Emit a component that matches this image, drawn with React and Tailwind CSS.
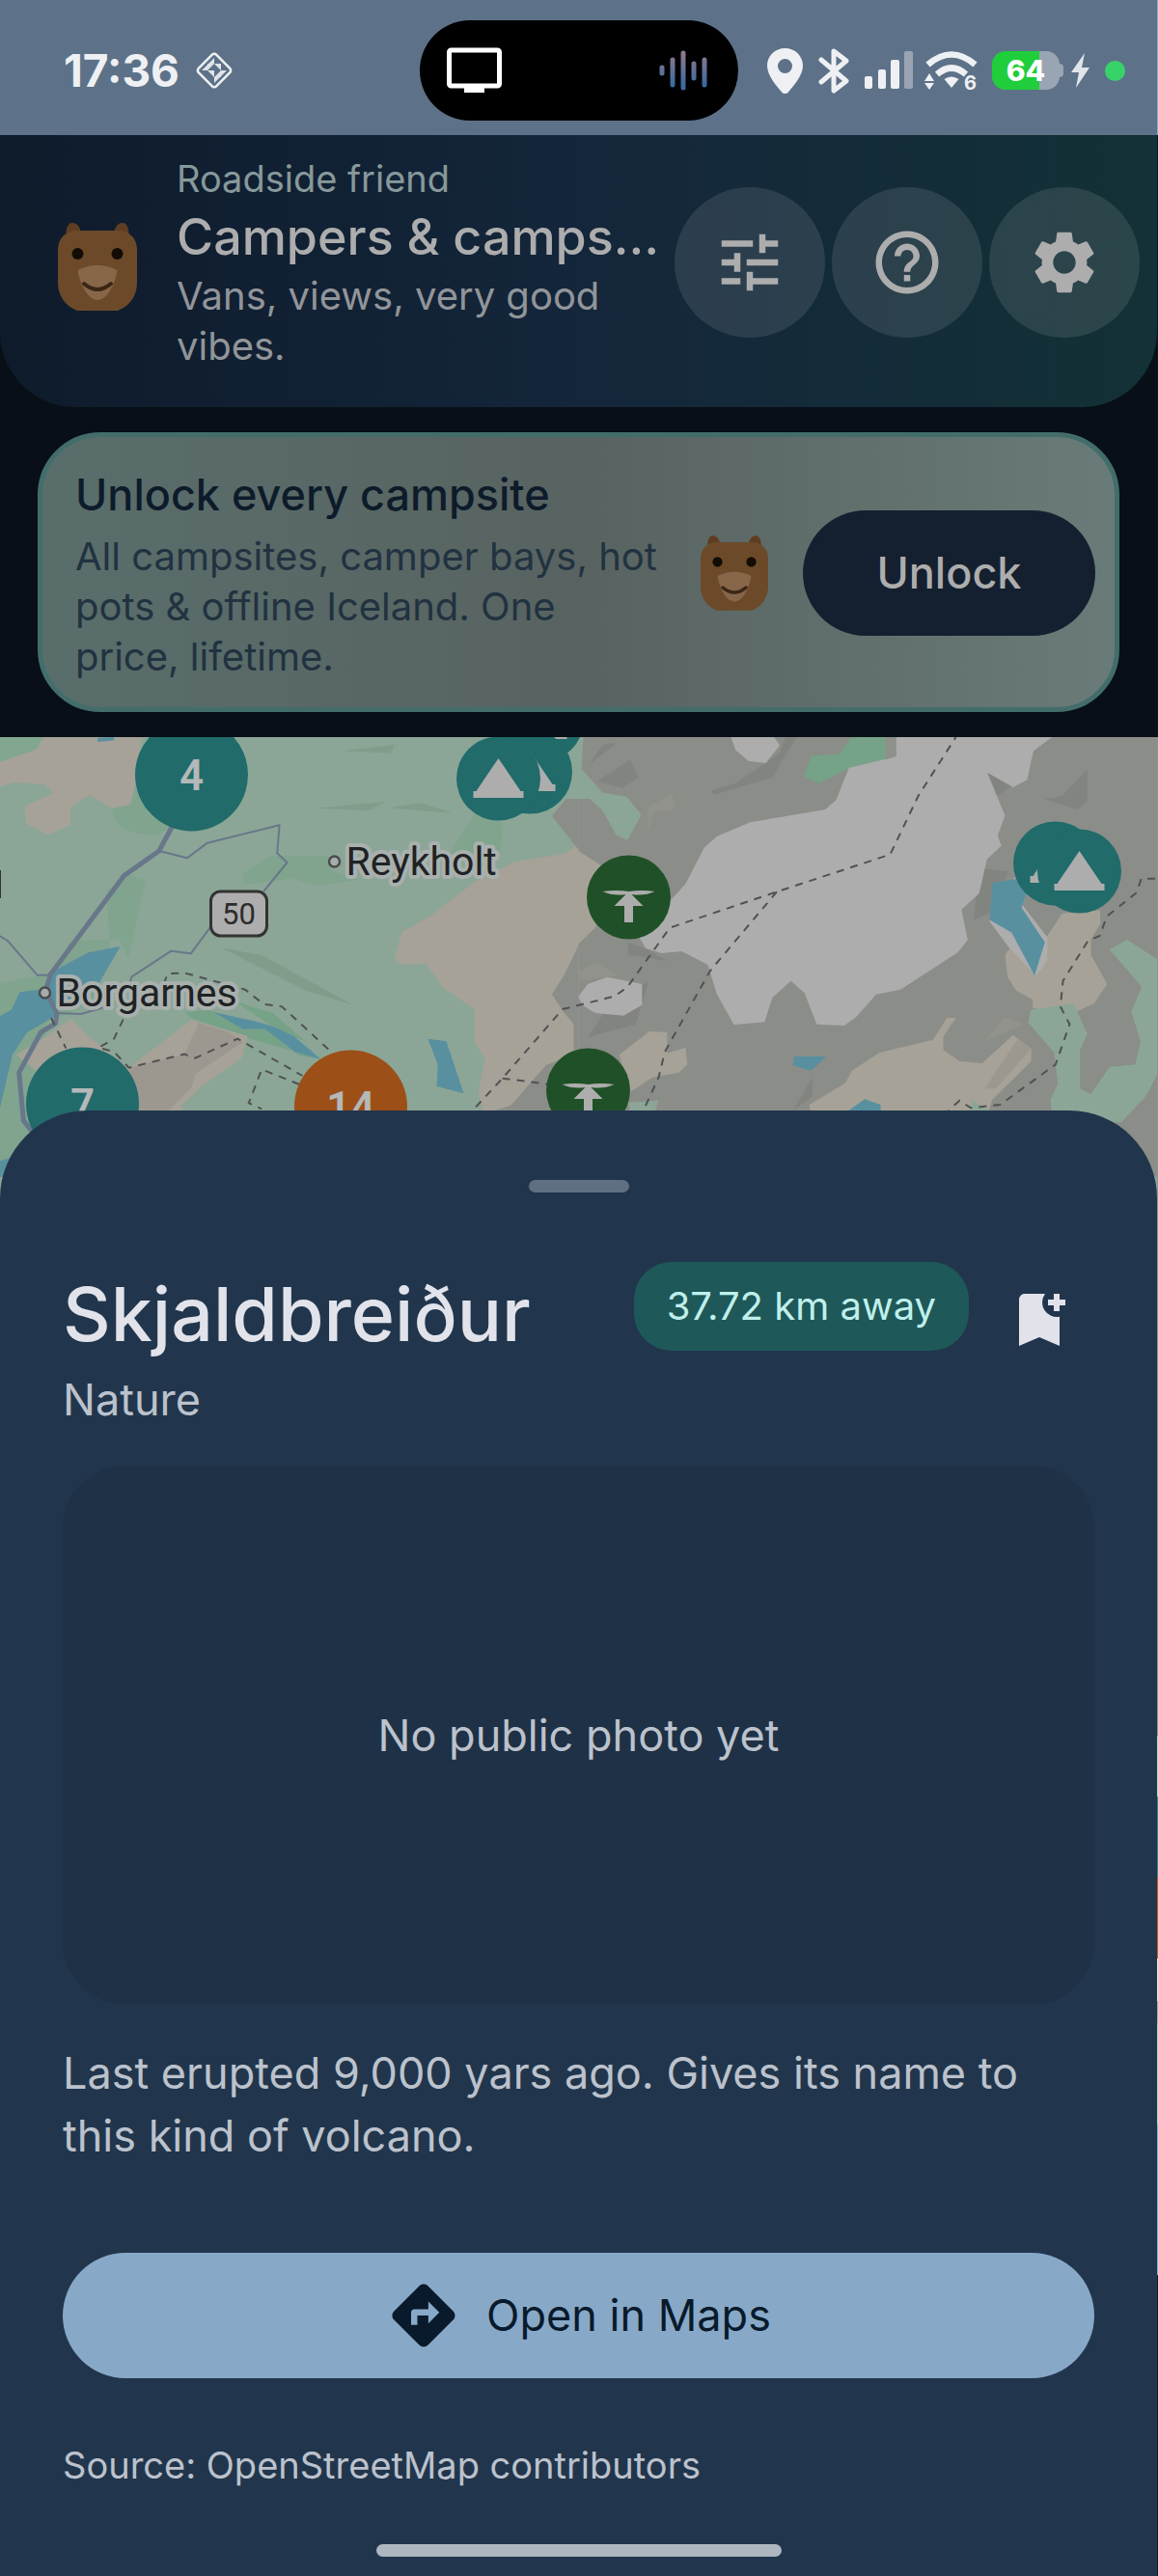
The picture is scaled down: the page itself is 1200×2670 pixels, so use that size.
import { MdBookmarkAdd, MdDirections, MdHelpOutline, MdSettings, MdTune } from 'react-icons/md';

const HEADER_ACTIONS = [
  { label: 'Filters', Icon: MdTune },
  { label: 'Help', Icon: MdHelpOutline },
  { label: 'Settings', Icon: MdSettings },
];

function Bear({ className }) {
  return (
    <svg viewBox="0 0 82 91" className={className} aria-hidden="true">
      <path d="M8 20C8 8 9 0 15 0s9 6 9 14zM74 20C74 8 73 0 67 0s-9 6-9 14z" fill="#5f3d20" />
      <path d="M20 8H62C74 8 82 16 82 28V62C82 75 75 86 62 91H20C7 86 0 75 0 62V28C0 16 8 8 20 8Z" fill="#6c4a29" />
      <circle cx="20.500" cy="32" r="6" fill="#120c05" />
      <circle cx="61.500" cy="32" r="6" fill="#120c05" />
      <path d="M20.500 49Q41 39 61.500 49C59 64 51 80 41 80S23 64 20.500 49Z" fill="#87664a" />
      <path d="M27 63Q41 75 55 63" fill="none" stroke="#3b2614" strokeWidth="4" strokeLinecap="round" />
    </svg>
  );
}

function StatusBar() {
  return (
    <div className="grid h-[140px] grid-cols-[1fr_330px_1fr] items-center bg-[#5d7288] pt-1.5 text-[#eef0f3]">
      <div className="flex items-center gap-4 pl-[66px]">
        <span className="text-[46px] leading-[56px] font-bold">17:36</span>
        <svg viewBox="0 0 40 40" className="size-10" fill="none" stroke="currentColor">
          <rect x="7" y="7" width="26" height="26" rx="3" strokeWidth="2.500" transform="rotate(45 20 20)" />
          <path
            d="M20 7v6h-6zM13 14v6H7zM13 13h7l-7 7zM20 13h7v7zM13 20h7v7zM20 27l7-7v7zM27 20h6l-6 6zM20 27h6l-6 6z"
            fill="currentColor"
            fillOpacity="0.900"
            stroke="none"
          />
        </svg>
      </div>

      <div className="flex h-[104px] items-center justify-between rounded-full bg-black pr-8 pl-7">
        <svg viewBox="0 0 57 48" className="h-12 w-[57px]">
          <rect x="2.500" y="3" width="52" height="37" rx="2" fill="none" stroke="#fff" strokeWidth="5" />
          <path d="M18 41h21v6H18z" fill="#fff" />
        </svg>
        <svg viewBox="0 0 50 42" className="h-[42px] w-[50px]" strokeWidth="5" strokeLinecap="round">
          <defs>
            <linearGradient id="wave" gradientUnits="userSpaceOnUse" x1="0" y1="2" x2="0" y2="36">
              <stop offset="0" stopColor="#95788c" />
              <stop offset="1" stopColor="#3a6ba0" />
            </linearGradient>
          </defs>
          <path d="M3 18v6M14 10v26M25 3v36M36 14v15M47 10v26" stroke="url(#wave)" />
        </svg>
      </div>

      <div className="flex items-center justify-end gap-4 pr-[33px]">
        <svg viewBox="0 0 37 47" className="h-[47px] w-[37px]" fill="currentColor">
          <path fillRule="evenodd" d="M18.500 0C29 0 37 8 37 18c0 11-10 21-15.500 28-1.500 1.600-4.500 1.600-6 0C10 39 0 29 0 18 0 8 8 0 18.500 0zm0 11a7.500 7.500 0 1 0 0 15 7.500 7.500 0 0 0 0-15z" />
        </svg>
        <svg viewBox="0 0 32 47" className="h-[47px] w-8" fill="none" stroke="currentColor" strokeWidth="5" strokeLinejoin="round" strokeLinecap="round">
          <path d="M3 12l26 22-13 10V3l13 10L3 35" />
        </svg>
        <svg viewBox="0 0 50 40" className="h-10 w-[50px]" fill="currentColor">
          <rect x="0" y="26" width="8" height="13" rx="2" />
          <rect x="14" y="19" width="8" height="20" rx="2" />
          <rect x="27" y="9" width="9" height="30" rx="2" />
          <rect x="41" y="0" width="9" height="39" rx="2" fill="#99a5b3" />
        </svg>
        <svg viewBox="0 0 54 41" className="-ml-1 h-[41px] w-[54px] overflow-visible" fill="none" stroke="currentColor" strokeWidth="6.500">
          <path d="M3.500 14Q28 -7 52.500 14" />
          <path d="M13 24Q28 11 43 24" />
          <path d="M20.500 29Q28 24 35.500 29L28 38Z" fill="currentColor" stroke="none" />
          <path d="M5 23l5 8H0zM0 33h10l-5 7z" fill="currentColor" stroke="none" />
          <text x="54" y="40" textAnchor="end" fill="currentColor" stroke="none" className="text-[20px] font-bold">6</text>
        </svg>
        <div className="flex items-center">
          <div className="flex h-10 w-[70px] items-center justify-center rounded-[14px] bg-linear-to-r from-[#20ce3b] from-70% to-[#99a5b3] to-70% text-[30px] leading-10 font-extrabold text-white">
            64
          </div>
          <div className="h-3.5 w-1 rounded-r-sm bg-[#99a5b3]" />
        </div>
        <svg viewBox="0 0 19 36" className="-ml-2 h-9 w-[19px]" fill="#e1e5ea">
          <path d="M14 0L0 20h8L5 36 19 15h-8z" />
        </svg>
        <div className="size-[21px] rounded-full bg-[#38d368]" />
      </div>
    </div>
  );
}

function Header() {
  return (
    <header className="flex items-center rounded-b-[78px] bg-linear-to-r from-[#0e1b2b] via-[#14263b] to-[#133136] pt-[19px] pr-[18px] pb-[37px] pl-[60px]">
      <Bear className="mt-2 h-[91px] w-[82px] shrink-0" />
      <div className="ml-[41px] min-w-0 flex-1">
        <p className="text-[38px] leading-[52px] text-[#87999a]">Roadside friend</p>
        <h1 className="text-[52px] leading-[70px] font-medium whitespace-nowrap text-[#adadad]">Campers &amp; camps…</h1>
        <p className="text-[40px] leading-[52px] text-[#929599]">Vans, views, very good vibes.</p>
      </div>
      <div className="ml-4 flex gap-[7px]">
        {HEADER_ACTIONS.map(({ label, Icon }) => (
          <button
            key={label}
            aria-label={label}
            className="flex size-[156px] items-center justify-center rounded-full bg-white/10 text-[#adadad]"
          >
            <Icon className="size-[78px]" />
          </button>
        ))}
      </div>
    </header>
  );
}

function UnlockBanner() {
  return (
    <section className="mx-[39px] my-[26px] flex items-center rounded-[65px] border-5 border-[#426d6b] bg-linear-to-r from-[#596e6b] via-[#586361] to-[#697b78] pt-[27px] pr-5 pb-[26px] pl-[34px]">
      <div className="flex-1">
        <h2 className="text-[45px] leading-[65px] font-medium text-[#0d1b2a]">Unlock every campsite</h2>
        <p className="mt-1.5 text-[40px] leading-[52px] text-[#213240]">
          All campsites, camper bays, hot pots &amp; offline Iceland. One price, lifetime.
        </p>
      </div>
      <Bear className="ml-9 h-[78px] w-[70px] shrink-0" />
      <button className="ml-9 h-[130px] w-[303px] shrink-0 rounded-full bg-[#142030] text-[45px] font-medium text-[#adadad]">
        Unlock
      </button>
    </section>
  );
}

function TentPin({ x, y }) {
  return (
    <g transform={`translate(${x} ${y})`}>
      <circle r="43.500" fill="#216b6b" />
      <path d="M0-21L23 13H26V20H-26V13H-23Z" fill="#adadad" />
    </g>
  );
}

function NaturePin({ x, y }) {
  return (
    <g transform={`translate(${x} ${y})`}>
      <circle r="43.500" fill="#205027" />
      <path d="M-27-6Q-13-8 0-6Q13-8 27-6Q16-1 3-3L15 9H4.500V26H-4.500V9H-15L-3-3Q-16-1-27-6Z" fill="#adadad" />
    </g>
  );
}

function ClusterPin({ x, y, count, fill }) {
  return (
    <g transform={`translate(${x} ${y})`}>
      <circle r="58.500" fill={fill} />
      <text y="16" textAnchor="middle" fill="#b4b8b8" className="font-[Roboto] text-[44px] font-semibold">{count}</text>
    </g>
  );
}

function PlaceLabel({ x, y, name }) {
  return (
    <g>
      <circle cx={x - 12} cy={y - 14} r="5.500" fill="#a9abab" stroke="#4a4c4c" strokeWidth="2.500" />
      <text
        x={x}
        y={y}
        fill="#202224"
        stroke="#a9b0ae"
        strokeWidth="8"
        strokeLinejoin="round"
        paintOrder="stroke"
        className="font-[Roboto] text-[41px]"
      >
        {name}
      </text>
    </g>
  );
}

function MapView() {
  return (
    <svg viewBox="0 0 1200 478" preserveAspectRatio="xMidYMid slice" className="block h-[478px] w-full" role="img" aria-label="Map of west Iceland">
      <rect width="1200" height="478" fill="#8ba696" />

      {/* west */}
      <g transform="translate(0 -4) scale(.38265 .33333)">
        <path d="M0 95L100 60 115 12H0Z" fill="#82a78f" />
        <path d="M0 90L100 50 118 12H385L370 150 355 222 333 252 242 192 193 230V285L132 316 72 280 68 228 145 185 122 158 40 153 0 168Z" fill="#a6a297" />
        <path d="M300 235L355 222 372 150 400 250 470 290 430 316 370 312 325 290Z M655 440L735 380 890 382 900 430 970 455 860 474 790 452 665 470Z M290 490L345 440 395 455 350 700 325 640 190 645 150 740 0 780V830L0 1380H60L130 900 250 840 300 690ZM1220 370L1290 245 1362 280 1358 365 1260 390Z" fill="#80a48e" />
        <path d="M930 55L1070 35 1060 62ZM850 233L1045 213 1000 240ZM1050 232L1140 217 1228 248ZM600 667L710 690 960 846 830 800Z" fill="#829c8b" />
        <path d="M267 14L310 12V22L265 27Z M145 740L240 682 327 663 268 780 150 850 120 820ZM55 805L125 795 150 880 75 930 35 1000 0 1170V880L32 860ZM570 865L690 895 780 925 870 1013 810 1000 715 920 655 920ZM1160 950L1210 958 1257 1120 1184 1098 1187 1030ZM0 1330L30 1320 10 1380H0Z" fill="#5890a0" />
        <path d="M500 868L570 860 660 920 720 920 810 1000 870 1013 650 940 520 885ZM640 835L740 870 830 960 730 905Z" fill="#76a287" />
        <path d="M45 1000L130 940 192 888 250 950 350 1040 520 890 672 942 655 1010 545 1100 490 1160 500 1173H90L100 1050Z" fill="#a6a297" />
        <path d="M350 1040L500 998 540 900 620 930 660 960 530 1060 520 1100 460 1173H370Z" fill="#9c988f" />
        <path d="M1568 345L1530 375 1395 400 1290 460 1165 570 1090 618 1070 700 1090 720 1155 715 1200 790 1287 860V960L1315 1015 1297 1110 1310 1180H1700V345Z" fill="#a6a297" />
        <path d="M1568 204H1535L1496 257 1568 362ZM1568 660L1530 750 1496 812 1530 870 1555 905V1000L1480 1032 1385 1157 1323 1180H1568Z" fill="#8b8d89" />
      </g>

      {/* highlands */}
      <g transform="translate(600 -4) scale(.38265 .33333)">
        <path d="M13 12H1568V1380H0V655L45 605 100 500 57 408 0 366V200Z" fill="#8b8d89" />
        <path d="M-30 12H13L8 110 65 185 130 197 170 253 133 332 103 318 65 240 30 204H-30Z" fill="#8ba696" />
        <path d="M50 150L140 82 163 138 120 170ZM30 95L65 35 105 30ZM360 178L425 155 510 90 545 60 560 12H590L525 138 365 192ZM1262 205L1310 195 1378 112V212L1352 238ZM135 650L190 675 240 708 135 690ZM25 945L80 850 190 770 155 905ZM1070 582L1085 420 1165 430 1110 560ZM1105 125L1190 150 1108 215ZM580 1173L633 1070V1130Z" fill="#828480" />
        <path d="M187 232L252 187 265 235 205 245 188 312ZM0 740L50 713 105 752 0 770ZM1103 955L1152 882 1207 905Z" fill="#91928b" />
        <path d="M610 135L630 70 705 65 738 12H845L835 80 735 108 652 156Z" fill="#76a287" />
        <path d="M835 12H860V72L732 108 698 207 668 237 465 277 375 320 340 356 290 468 245 525 165 635 182 668 225 684 280 678 350 720 375 812 421 906 504 898 525 822 575 770 612 808 645 905 720 909 752 882 806 812 872 797 1027 682 1054 643 1037 548 1085 498 1106 392 1145 350 1135 318 1155 256 1107 122 1177 168 1215 145 1232 55 1283 12Z" fill="#adadad" />
        <path d="M832 12H860V72L832 82Z" fill="#8e918c" />
        <path d="M413 12H530L545 38 507 93 460 86 425 52ZM0 818L25 780 78 758 172 780V845L122 878 45 870 10 845Z" fill="#adadad" />
        <path d="M110 1000L192 927 240 930V995L290 977 295 1030 272 1055 200 1070 140 1115ZM625 1155L722 1088 740 1050 815 993 960 953 998 885H1022L988 942V985L1032 1020 1093 1026 1177 938 1226 980V1020L1120 1140 1110 1180H628ZM1268 632L1310 560 1412 550 1414 590 1388 640V690L1432 780 1396 840 1340 870 1230 855V828L1185 800 1162 758 1155 690 1170 665 1240 755 1270 700Z" fill="#a6a297" />
        <path d="M1100 1105L1190 950 1226 980 1130 1105Z" fill="#9c988f" />
        <path d="M1225 860L1340 840 1378 935 1358 985V1105L1387 1122 1438 1038 1508 1030 1522 958 1497 865 1525 788 1438 673 1485 642 1568 703V1060L1535 1130 1470 1210H1285L1278 1140 1298 1090 1288 993 1218 900ZM135 1148L217 1142 205 1180H140ZM1065 1140L1112 1173H1065Z" fill="#8ba696" />
        <path d="M1113 585L1165 665 1240 755 1270 705V635L1203 535 1215 490 1180 448Z" fill="#adadad" />
        <path d="M1121 466L1183 453 1215 495 1200 542 1263 650 1235 753 1173 620 1113 580ZM585 1005H670L630 1050 580 1032ZM732 1173L775 1138 818 1155V1173Z" fill="#5890a0" />
      </g>

      {/* roads */}
      <g transform="translate(0 -4) scale(.38265 .33333)" fill="none" stroke="#68778a" strokeLinejoin="round">
        <path d="M470 285L432 366 338 442 138 750 125 800 155 870 152 902 112 930 53 1055 65 1205 90 1240" strokeWidth="5" vectorEffect="non-scaling-stroke" />
        <path d="M432 366L508 388 563 341 758 286 752 373 779 402 715 492M570 605L518 685 465 677 358 757 352 780M0 630L22 645 102 752H138M155 870L220 873 290 850" strokeWidth="2" vectorEffect="non-scaling-stroke" />
      </g>

      {/* trails */}
      <g transform="translate(0 -4) scale(.38265 .33333)" fill="none" stroke="#505254" strokeWidth="2" strokeDasharray="8 7">
        <path d="M445 780L455 748 500 745 665 797 715 842 765 850 905 998M140 885L180 980M335 890L310 950 268 978 310 990 350 1040 500 998 530 1010 645 950 820 1065M812 1092L710 1045 675 1150 710 1168" vectorEffect="non-scaling-stroke" />
        <path d="M1290 1162L1362 1073 1525 858 1665 818 1700 790 1815 605 2105 493 2412 377 2488 195 2590 12M1362 1073L1490 1092M2105 493L1925 738 1802 990 1785 1070 1745 1170M3130 452H3092L3080 495 2998 570 2980 630 2948 645 2880 770 2873 850 2898 905 2860 1030 2710 1155 2630 1165 2600 1142 2570 1173" vectorEffect="non-scaling-stroke" />
      </g>

      <rect x="219" y="160" width="58" height="46" rx="10" fill="#adadad" stroke="#333" strokeWidth="3" />
      <text x="248" y="194" textAnchor="middle" fill="#2c2c2c" className="font-[Roboto] text-[31px]">50</text>
      <path d="M0 138V167" stroke="#333" strokeWidth="3" />
      <PlaceLabel x={359} y={143} name="Reykholt" />
      <PlaceLabel x={59} y={279} name="Borgarnes" />

      <ClusterPin x={199} y={39} count={4} fill="#216b6b" />
      <ClusterPin x={86} y={380} count={7} fill="#216b6b" />
      <ClusterPin x={364} y={383} count={14} fill="#9c5017" />
      <TentPin x={562} y={-18} />
      <TentPin x={550} y={36} />
      <TentPin x={517} y={43} />
      <TentPin x={1094} y={131} />
      <TentPin x={1119} y={139} />
      <NaturePin x={652} y={166} />
      <NaturePin x={610} y={366} />
    </svg>
  );
}

function PlaceSheet() {
  return (
    <section className="relative -mt-[91px] rounded-t-[91px] bg-[#21364d] px-[65px] pt-[72px] pb-5">
      <div className="mx-auto h-[13px] w-[104px] rounded-full bg-[#606f82]" />

      <div className="mt-[72px] flex items-start">
        <div className="flex-1">
          <h2 className="text-[77px] leading-[108px] font-medium text-[#e2e3ea]">Skjaldbreiður</h2>
          <p className="mt-0.5 text-[45px] leading-[65px] text-[#bcc2cc]">Nature</p>
        </div>
        <span className="flex h-[92px] items-center rounded-[39px] bg-[#1f5858] px-[34px] text-[40px] text-[#bff0ec]">
          37.72 km away
        </span>
        <button aria-label="Save place" className="mt-6 mr-[21px] ml-[37px] text-[#e2e3ea]">
          <MdBookmarkAdd className="size-[72px]" />
        </button>
      </div>

      <div className="mt-9 flex h-[559px] items-center justify-center rounded-[65px] bg-[#1f3146] text-[45px] text-[#bcc2cc]">
        No public photo yet
      </div>

      <p className="mt-[38px] text-[45px] leading-[65px] text-[#bcc2cc]">
        Last erupted 9,000 yars ago. Gives its name to this kind of volcano.
      </p>

      <button className="mt-[89px] flex h-[130px] w-full items-center justify-center gap-[26px] rounded-full bg-[#88a8c8] text-[45px] text-[#081a2b]">
        <MdDirections className="size-[78px]" />
        Open in Maps
      </button>

      <p className="mt-16 text-[38px] leading-[52px] text-[#bcc2cc]">Source: OpenStreetMap contributors</p>
      <div className="mx-auto mt-14 h-[13px] w-[420px] rounded-full bg-[#aeb6bf]" />
    </section>
  );
}

// Sliver of the undimmed screen behind the sheet, top to bottom
function EdgeStrip() {
  return (
    <div className="flex w-px flex-col">
      <div className="h-[140px] bg-[#86aed2]" />
      <div className="h-[624px] bg-[#0c1620]" />
      <div className="h-[1035px] bg-[#8b9493]" />
      <div className="h-[63px] bg-[#b3dccb]" />
      <div className="h-[84px] bg-[#2c8789]" />
      <div className="h-[84px] bg-[#b0602c]" />
      <div className="h-[44px] bg-[#dfe6e8]" />
      <div className="h-[23px] bg-[#a3abb0]" />
      <div className="h-[105px] bg-[#a8d8c4]" />
      <div className="h-[156px] bg-[#74b9d3]" />
      <div className="flex-1 bg-[#101c29]" />
    </div>
  );
}

export default function App() {
  return (
    <div className="flex bg-[#080f16] font-[Inter,sans-serif]">
      <main className="min-w-0 flex-1 overflow-hidden">
        <StatusBar />
        <Header />
        <UnlockBanner />
        <MapView />
        <PlaceSheet />
      </main>
      <EdgeStrip />
    </div>
  );
}
